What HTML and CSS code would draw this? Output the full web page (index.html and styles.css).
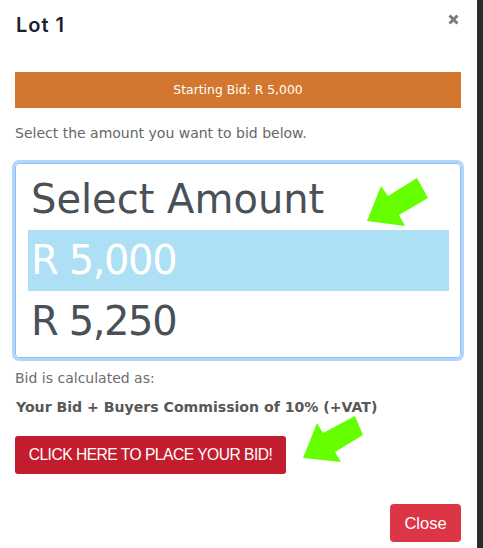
FILE: index.html
```html
<!DOCTYPE html>
<html lang="en">
<head>
<meta charset="utf-8">
<title>Lot 1</title>
<link rel="stylesheet" href="styles.css">
</head>
<body>
<div class="page">
  <div class="modal">
    <div class="modal-header">
      <h1 class="modal-title">Lot 1</h1>
      <button class="x-btn" aria-label="Close">
        <svg width="11" height="11" viewBox="0 0 11 11"><path d="M1.5 1.5 L9.5 9.5 M9.5 1.5 L1.5 9.5" stroke="#7b7b7b" stroke-width="3" stroke-linecap="butt"/></svg>
      </button>
    </div>
    <div class="modal-body">
      <div class="start-bar">Starting Bid: R 5,000</div>
      <p class="hint">Select the amount you want to bid below.</p>
      <div class="select-wrap">
        <div class="listbox" role="listbox">
          <div class="opt" role="option">Select Amount</div>
          <div class="opt opt-num opt-selected" role="option" aria-selected="true">R 5,000</div>
          <div class="opt opt-num" role="option">R 5,250</div>
        </div>
        <svg class="arrow arrow-one" width="70" height="56" viewBox="0 0 70 56"><polygon points="0,45 14,10 21,20 50,2 61,22 32,39 38,50" fill="#66ff00"/></svg>
      </div>
      <p class="calc">Bid is calculated as:</p>
      <p class="formula">Your Bid + Buyers Commission of 10% (+VAT)</p>
      <div class="bid-row">
        <button class="bid-btn">CLICK HERE TO PLACE YOUR BID!</button>
        <svg class="arrow arrow-two" width="62" height="48" viewBox="0 0 62 48"><polygon points="0,42 14,7 20,17 52,0 60,19 32,36 38,46" fill="#66ff00"/></svg>
      </div>
    </div>
    <div class="modal-footer">
      <button class="close-btn">Close</button>
    </div>
  </div>
  <div class="edge"></div>
</div>
</body>
</html>
```
FILE: styles.css
```css
* { box-sizing: border-box; }
html, body { margin: 0; padding: 0; background: #fff; }
body { font-family: "DejaVu Sans", "Open Sans", sans-serif; }

.page { display: flex; width: 483px; height: 548px; overflow: hidden; }
.modal { width: 477px; background: #fff; display: flex; flex-direction: column; }
.edge { flex: 1; background: #2a2b2f; }

.modal-header {
  display: flex;
  justify-content: space-between;
  align-items: flex-start;
  padding: 10px 18px 0 16px;
}
.modal-title {
  margin: 0;
  font-family: Inter, "Noto Sans", sans-serif;
  font-weight: 600;
  font-size: 20px;
  line-height: 30px;
  letter-spacing: 1px;
  color: #1b1e2c;
}
.x-btn {
  margin-top: 4px;
  padding: 0;
  border: 0;
  background: none;
  width: 11px;
  height: 11px;
  display: flex;
}

.modal-body { padding: 32px 16px 0 15px; }

.start-bar {
  height: 36px;
  line-height: 36px;
  background: #d3772f;
  color: #fff;
  text-align: center;
  font-size: 12.4px;
  font-weight: 500;
}

.hint {
  margin: 15px 0 0 0;
  font-size: 14px;
  line-height: 20px;
  color: #676767;
}

.select-wrap { position: relative; margin-top: 20px; }
.listbox {
  border: 1px solid #8fbff7;
  box-shadow: 0 0 0 3px #b3d5fb;
  border-radius: 4px;
  padding: 5px 11px 5px 12px;
  height: 195px;
}
.opt {
  height: 61px;
  line-height: 61px;
  padding-left: 3px;
  font-size: 40px;
  font-weight: normal;
  color: #495057;
  white-space: nowrap;
}
.opt-num { letter-spacing: -1.4px; }
.opt-selected { background: #ade0f4; color: #fff; }

.arrow { position: absolute; }
.arrow-one { left: 352px; top: 13px; }

.calc {
  margin: 10px 0 0 0;
  font-size: 14px;
  line-height: 20px;
  color: #6c6c6c;
}
.formula {
  margin: 8px 0 0 1px;
  font-size: 14.1px;
  font-weight: bold;
  line-height: 22px;
  color: #575757;
}

.bid-row { position: relative; margin-top: 18px; }
.bid-btn {
  height: 38px;
  width: 271px;
  padding: 0;
  border: 0;
  border-radius: 3px;
  background: #c11d2e;
  color: #fff;
  font-family: "Liberation Sans", Arial, sans-serif;
  font-size: 15.6px;
  letter-spacing: -0.5px;
}
.arrow-two { left: 288px; top: -20px; }

.modal-footer {
  display: flex;
  justify-content: flex-end;
  padding: 30px 16px 0 0;
}
.close-btn {
  width: 71px;
  height: 38px;
  padding: 0;
  border: 0;
  border-radius: 4px;
  background: #dc3545;
  color: #fff;
  font-family: "Liberation Sans", Arial, sans-serif;
  font-size: 16.5px;
}
```
